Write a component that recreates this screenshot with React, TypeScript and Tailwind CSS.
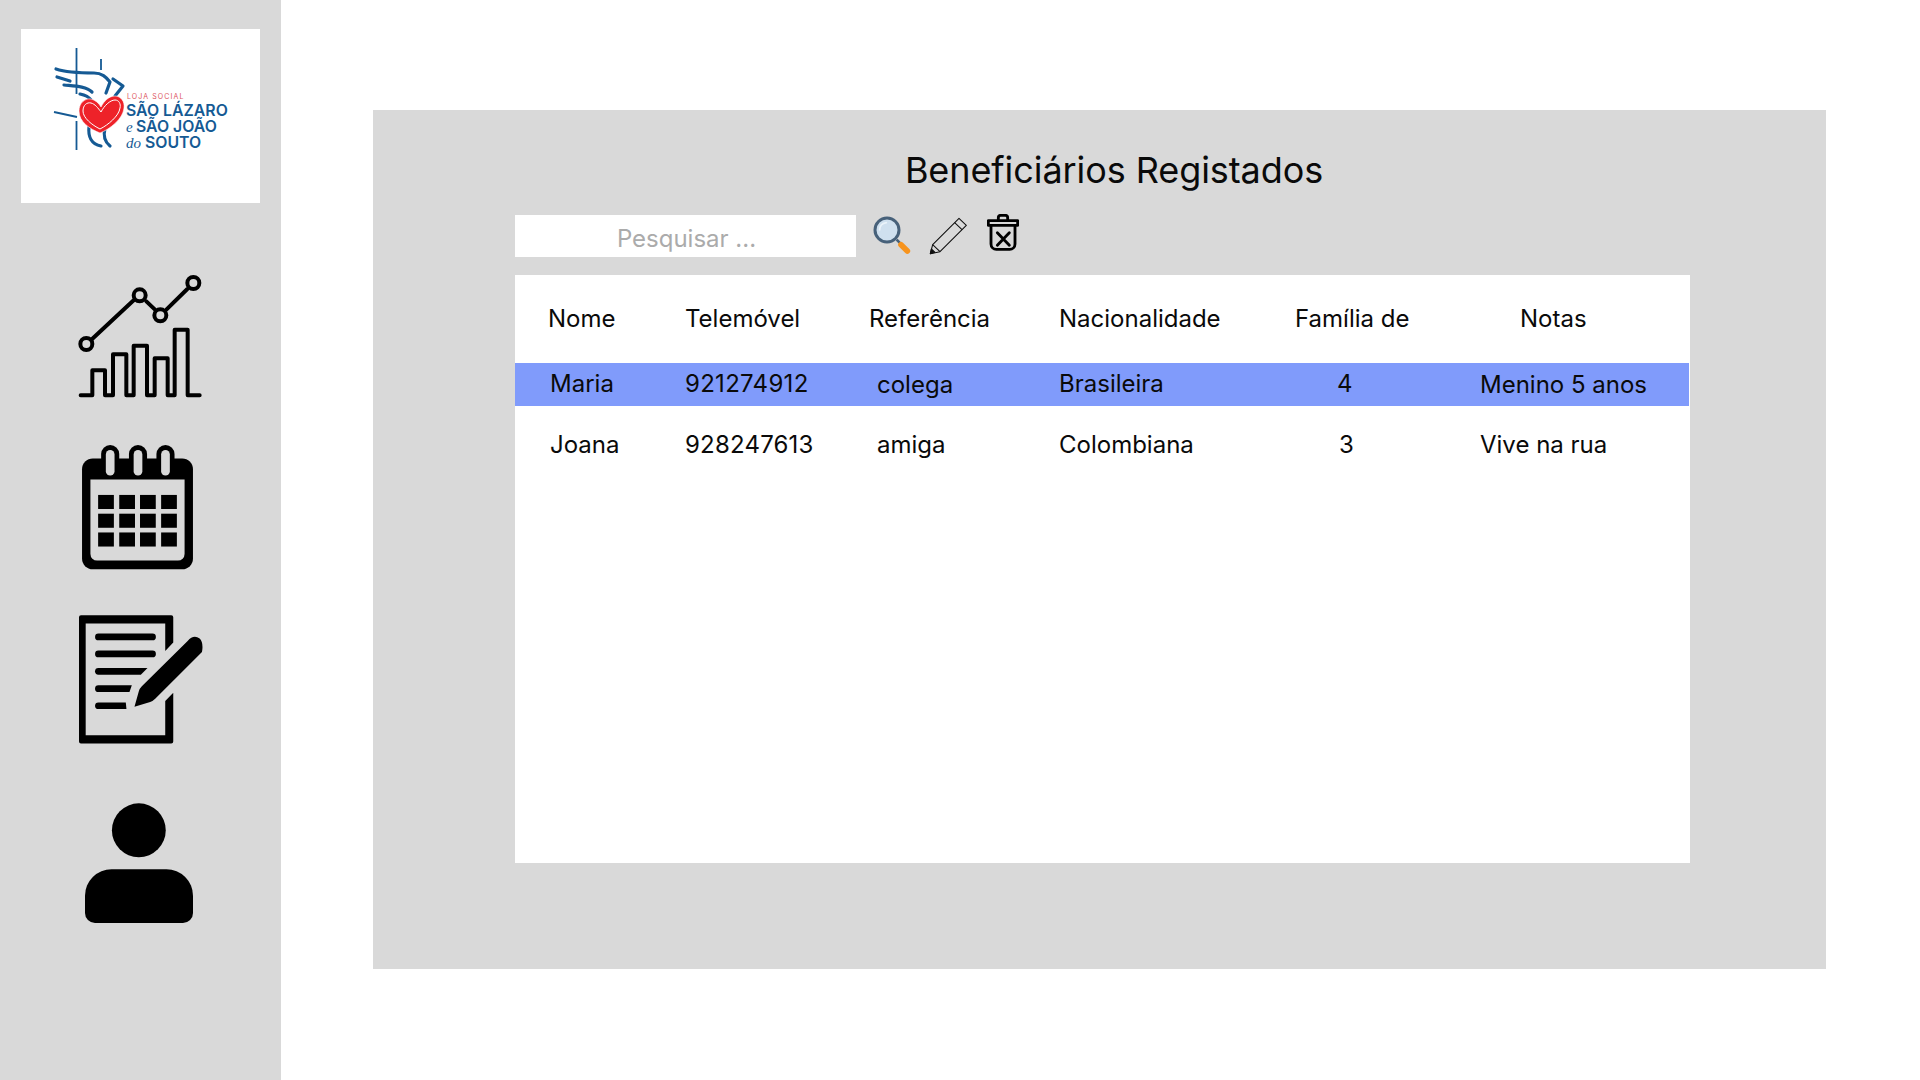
import React from "react";

const F = { fontFamily: "Inter, 'Liberation Sans', sans-serif" };
const rowGrid = "grid grid-cols-[170px_184px_190px_236px_185px_210px] items-center text-[24px] leading-[30px] text-[#0a0a0a]";

function Logo() {
  const blue = "#155a94";
  return (
    <svg width="239" height="174" viewBox="21 29 239 174" fill="none">
      <g stroke={blue} strokeWidth="1.8">
        <path d="M76.5 48V94M76.5 121V150M101 59V70M54 112L77 117" />
      </g>
      <g stroke={blue} strokeWidth="3.2" strokeLinecap="round" strokeLinejoin="round">
        <path d="M56 69C68 73 82 73 94 73C102 73 106 77 110 82L106 93" />
        <path d="M57 77L70 81" />
        <path d="M64 85C74 86 86 86 92 92" />
        <path d="M113 79L123 86L115 96" />
        <path d="M80 94C85 95 89 97 91 100" />
        <path d="M89 127C88 136 91 144 101 146" />
        <path d="M105 128C103 136 105 142 110 146" />
      </g>
      <path d="M100 133C90 129 79 122 79 111C79 103 85 98 91 99C95 100 99 103 101 107C104 101 109 96 115 96C121 96 125 102 124 108C123 119 110 129 100 133Z" fill="#ee2229" stroke="#fff" strokeWidth="0.6" />
      <path d="M100 129C92 125 83 118 83 111C83 105 87 102 91 103C95 104 98 108 101 112C104 106 110 100 115 100C119 100 121 104 120 108C119 116 108 125 100 129Z" stroke="#fff" strokeWidth="1" />
      <g style={{ fontFamily: "Inter, 'Liberation Sans', sans-serif" }}>
        <text x="127" y="99" fontSize="7" letterSpacing="1.1" fill="#dd5560">LOJA SOCIAL</text>
        <text x="126" y="116" fontSize="15.8" fontWeight="600" fill={blue}>SÃO LÁZARO</text>
        <text x="136" y="132" fontSize="15.8" fontWeight="600" fill={blue}>SÃO JOÃO</text>
        <text x="145" y="148" fontSize="15.8" fontWeight="600" fill={blue}>SOUTO</text>
      </g>
      <g style={{ fontFamily: "'Liberation Serif', serif" }} fontStyle="italic" fill={blue}>
        <text x="126" y="132" fontSize="15">e</text>
        <text x="126" y="148" fontSize="15">do</text>
      </g>
    </svg>
  );
}

function ChartIcon() {
  return (
    <svg className="ml-[78px] mt-[70px]" width="125" height="127" viewBox="85 40 375 381" fill="none" stroke="#000" strokeWidth="12" strokeLinecap="round" strokeLinejoin="round">
      <path d="M125 240L252 122M290 125L316 150M350 150L413 88" />
      <circle cx="110" cy="253" r="18" />
      <circle cx="270" cy="107" r="18" />
      <circle cx="332" cy="167" r="18" />
      <circle cx="431" cy="70" r="18" />
      <path d="M93 407H128V332H166V407H190V284H230V407H252V258H292V407H315V296H354V407H375V210H414V407H450" />
    </svg>
  );
}

function CalendarIcon() {
  const xs = [145, 208, 270, 333];
  const ys = [704, 760, 816];
  return (
    <svg className="ml-[81px] mt-[45px]" width="113" height="125" viewBox="95 555 335 373">
      <rect x="97" y="595" width="331" height="331" rx="32" fill="#000" />
      <path d="M122 658H403V880a20 20 0 0 1-20 20H142a20 20 0 0 1-20-20Z" fill="#d9d9d9" />
      {[181, 264, 346].map((x) => (
        <g key={x}>
          <rect x={x - 27} y="555" width="54" height="90" rx="27" fill="#000" />
          <rect x={x - 13} y="570" width="26" height="76" rx="13" fill="#d9d9d9" />
        </g>
      ))}
      {ys.map((y) => xs.map((x) => <rect key={`${x}-${y}`} x={x} y={y} width="47" height="42" fill="#000" />))}
    </svg>
  );
}

function DocIcon() {
  return (
    <svg className="ml-[79px] mt-[45px]" width="124" height="129" viewBox="87 78 371 385" fill="#000">
      <path d="M93 78H363a6 6 0 0 1 6 6V160L345 185V103H107V437H345V335L369 310V456a6 6 0 0 1-6 6H93a6 6 0 0 1-6-6V84a6 6 0 0 1 6-6Z" />
      <rect x="135" y="133" width="182" height="20" rx="10" />
      <rect x="135" y="184" width="182" height="20" rx="10" />
      <path d="M145 236H292L272 256H145a10 10 0 0 1 0-20Z" />
      <path d="M145 288H245L238 308H145a10 10 0 0 1 0-20Z" />
      <path d="M145 339H227L229 359H145a10 10 0 0 1 0-20Z" />
      <path d="M253 352L266 306Q268 298 275 291L412 155Q430 135 448 148Q460 160 455 188L315 328Q308 335 300 338Z" />
    </svg>
  );
}

function PersonIcon() {
  return (
    <svg className="ml-[85px] mt-[59px]" width="108" height="121" viewBox="105 638 325 362" fill="#000">
      <circle cx="267" cy="719" r="81" />
      <path d="M185 836H350A80 80 0 0 1 430 916V968A30 30 0 0 1 400 998H135A30 30 0 0 1 105 968V916A80 80 0 0 1 185 836Z" />
    </svg>
  );
}

function SearchIcon() {
  return (
    <svg className="ml-[17px] mt-px" width="38" height="39" viewBox="38 34 114 117" fill="none">
      <circle cx="80" cy="76" r="36" fill="#cfe0ef" stroke="#47617a" strokeWidth="9" />
      <path d="M58 76C58 64 66 56 78 54" stroke="#eaf3fa" strokeWidth="5" strokeLinecap="round" />
      <path d="M109 105L120 116" stroke="#47617a" strokeWidth="8" />
      <path d="M122 120L141 139" stroke="#f7941e" strokeWidth="17" strokeLinecap="round" />
    </svg>
  );
}

function PencilIcon() {
  return (
    <svg className="ml-[18px] mt-[1.5px]" width="38" height="38" viewBox="208 35 114 114" fill="none" stroke="#111" strokeWidth="3.2" strokeLinejoin="round">
      <path d="M212 145L219 118L298 39L320 60L241 139Z" />
      <path d="M219 118L241 139M285 52L307 73" />
      <path d="M212 145L215 131L226 141Z" fill="#111" />
    </svg>
  );
}

function TrashIcon() {
  return (
    <svg className="ml-[20px] -mt-[1px]" width="32" height="37" viewBox="380 30 96 111" fill="none" stroke="#000" strokeWidth="8.5" strokeLinecap="round" strokeLinejoin="round">
      <path d="M384 50H472V64H384Z" />
      <path d="M414 49V41a7 7 0 0 1 7-7H435a7 7 0 0 1 7 7V49" />
      <path d="M392 64V120a16 16 0 0 0 16 16H448a16 16 0 0 0 16-16V64" />
      <path d="M411 86L447 124M447 86L411 124" />
    </svg>
  );
}

export default function App() {
  return (
    <div className="flex w-[1920px] h-[1080px] overflow-hidden bg-white" style={F}>
      <aside className="w-[281px] h-full bg-[#d9d9d9] shrink-0">
        <div className="ml-[21px] mt-[29px] w-[239px] h-[174px] bg-white">
          <Logo />
        </div>
        <ChartIcon />
        <CalendarIcon />
        <DocIcon />
        <PersonIcon />
      </aside>
      <main className="flex-1 pl-[92px] pt-[110px]">
        <section className="w-[1453px] h-[859px] bg-[#d9d9d9] pl-[142px] pt-[36px]">
          <h1 className="w-[1198px] text-center text-[36px] leading-[48px] font-normal tracking-[-0.08px] text-[#0a0a0a]">Beneficiários Registados</h1>
          <div className="flex items-start mt-[21px] h-[42px]">
            <input
              readOnly
              placeholder="Pesquisar ..."
              className="w-[341px] h-[42px] bg-white text-center pl-[2px] pt-[4px] text-[24px] outline-none placeholder:text-[#ababab]"
            />
            <SearchIcon />
            <PencilIcon />
            <TrashIcon />
          </div>
          <div className="mt-[18px] w-[1175px] h-[588px] bg-white">
            <div className={`${rowGrid} h-[88px]`}>
              <div className="pl-[33px]">Nome</div>
              <div>Telemóvel</div>
              <div>Referência</div>
              <div>Nacionalidade</div>
              <div>Família de</div>
              <div className="pl-[40px]">Notas</div>
            </div>
            <div className={`${rowGrid} h-[43px] w-[1174px] bg-[#809bfb]`}>
              <div className="pl-[35px] pb-[2px]">Maria</div>
              <div className="pb-[2px] tracking-[0.3px]">921274912</div>
              <div className="pl-[8px]">colega</div>
              <div className="pb-[2px]">Brasileira</div>
              <div className="pl-[42px] pb-[2px]">4</div>
              <div>Menino 5 anos</div>
            </div>
            <div className={`${rowGrid} h-[43px] mt-[18px]`}>
              <div className="pl-[35px] pb-[2px]">Joana</div>
              <div className="pb-[2px] tracking-[0.2px]">928247613</div>
              <div className="pl-[8px] pb-[2px]">amiga</div>
              <div className="pb-[2px]">Colombiana</div>
              <div className="pl-[44px] pb-[2px]">3</div>
              <div className="pb-[2px]">Vive na rua</div>
            </div>
          </div>
        </section>
      </main>
    </div>
  );
}
